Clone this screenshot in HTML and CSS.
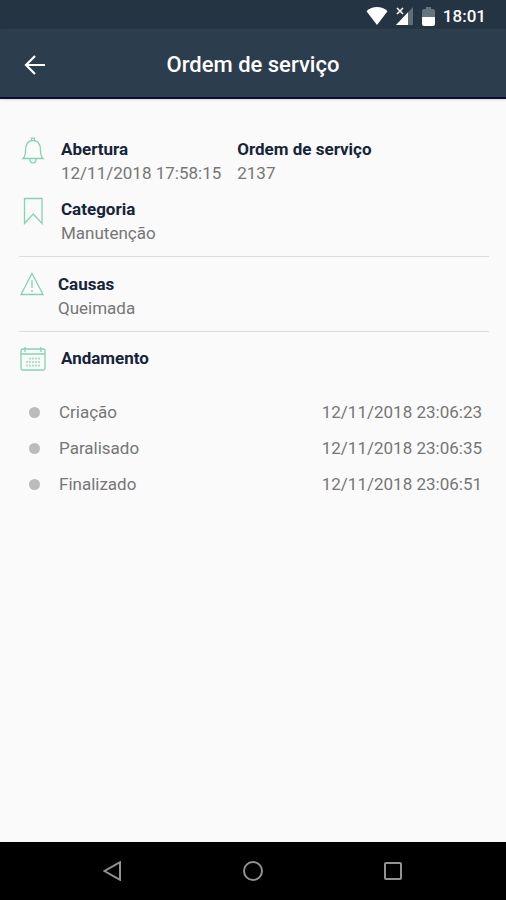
FILE: index.html
```html
<!DOCTYPE html>
<html lang="pt-BR">
<head>
<meta charset="utf-8">
<meta name="viewport" content="width=device-width, initial-scale=1">
<title>Ordem de serviço</title>
<link rel="stylesheet" href="styles.css">
</head>
<body>
<div class="status-bar">
  <svg width="22" height="18" viewBox="0 0 22 18" aria-hidden="true"><path d="M11 18 .5 4.200Q5 0 11 0t10.500 4.200z" fill="#fff"/></svg>
  <svg width="18" height="18" viewBox="0 0 18 18" aria-hidden="true"><path d="M17 0v18H0z" fill="#5f6d79"/><path d="M12 5.300V18H0z" fill="#fff"/><path d="m1 1 6 6M7 1 1 7" stroke="#fff" stroke-width="1.600"/></svg>
  <svg width="13" height="19" viewBox="0 0 13 19" aria-hidden="true"><path d="M4 0h5v2h2q2 0 2 2v7H0V4q0-2 2-2h2z" fill="#66747f"/><path d="M0 10h13v7q0 2-2 2H2q-2 0-2-2z" fill="#fff"/></svg>
  <time>18:01</time>
</div>
<header class="app-bar">
  <button class="back" type="button" aria-label="Voltar">
    <svg width="22" height="20" viewBox="0 0 22 20" fill="none" stroke="#fff" stroke-width="2.200" aria-hidden="true"><path d="M21 10H2M11 1 2 10l9 9"/></svg>
  </button>
  <h1>Ordem de serviço</h1>
</header>
<main>
  <section class="group">
    <div class="entry">
      <svg class="icon" width="26" height="28" viewBox="0 0 26 28" aria-hidden="true"><path d="M3 21.500c2-2 2.500-4 2.500-8 0-6 2.500-10 7.500-10s7.500 4 7.500 10c0 4 .5 6 2.500 8zM11.500 3.500V1.200h3v2.300M9.800 21.700c0 5.500 6.400 5.500 6.400 0"/></svg>
      <div class="pair">
        <div class="field"><h2>Abertura</h2><p>12/11/2018 17:58:15</p></div>
        <div class="field"><h2>Ordem de serviço</h2><p>2137</p></div>
      </div>
    </div>
    <div class="entry">
      <svg class="icon" width="26" height="28" viewBox="0 0 26 28" aria-hidden="true"><path d="M4.500 1.500h17.500v25l-8.750-9.500-8.750 9.500z"/></svg>
      <div class="field"><h2>Categoria</h2><p>Manutenção</p></div>
    </div>
  </section>
  <section class="group causes">
    <div class="entry">
      <svg class="icon" width="24" height="24" viewBox="0 0 24 24" aria-hidden="true"><path d="M12 1.500 23 22.500H1z"/><path d="M12 8v8M12 18v2"/></svg>
      <div class="field"><h2>Causas</h2><p>Queimada</p></div>
    </div>
  </section>
  <section class="group progress">
    <div class="entry">
      <svg class="icon" width="26" height="26" viewBox="0 0 26 26" aria-hidden="true"><rect x="1" y="3" width="24" height="21" rx="1.500"/><path d="M1 8h24M5 1v5M21 1v5"/><path d="M9 12.500h12M6 16h15M6 19.500h15" stroke-width="2" stroke-dasharray="2 1" opacity=".65"/></svg>
      <div class="field"><h2>Andamento</h2></div>
    </div>
    <ul class="timeline">
      <li><span class="step">Criação</span><time>12/11/2018 23:06:23</time></li>
      <li><span class="step">Paralisado</span><time>12/11/2018 23:06:35</time></li>
      <li><span class="step">Finalizado</span><time>12/11/2018 23:06:51</time></li>
    </ul>
  </section>
</main>
<nav class="system-nav" aria-label="Sistema">
  <button type="button" aria-label="Voltar"><svg width="20" height="20" viewBox="0 0 20 20" aria-hidden="true"><path d="M17 1.200v17.600L1.500 10z"/></svg></button>
  <button type="button" aria-label="Início"><svg width="20" height="20" viewBox="0 0 20 20" aria-hidden="true"><circle cx="10" cy="10" r="9"/></svg></button>
  <button type="button" aria-label="Recentes"><svg width="20" height="20" viewBox="0 0 20 20" aria-hidden="true"><rect x="2" y="2" width="16" height="16" rx="1"/></svg></button>
</nav>
</body>
</html>
```
FILE: styles.css
```css
* {
  box-sizing: border-box;
}

body {
  margin: 0;
  min-height: 100vh;
  display: flex;
  flex-direction: column;
  background: #fafafa;
  color: #767676;
  font: 17px/24px Roboto, sans-serif;
}

h1, h2, p, ul {
  margin: 0;
  padding: 0;
}

button {
  padding: 0;
  border: 0;
  background: none;
}

svg {
  display: block;
  flex: none;
}

.status-bar {
  display: flex;
  align-items: center;
  justify-content: flex-end;
  gap: 8px;
  height: 30px;
  padding: 2px 20px 0;
  background: #243442;
  color: #fff;
  font-weight: 500;
}

.app-bar {
  display: grid;
  grid-template-columns: 70px 1fr 70px;
  align-items: center;
  height: 69px;
  padding-top: 3px;
  background: #2c3e4e;
  border-bottom: 2px solid #0d0b30;
  box-shadow: 0 1px 2px #dcd5e6;
}

.back {
  height: 48px;
  display: grid;
  place-items: center;
}

h1 {
  color: #fff;
  font-size: 22px;
  font-weight: 500;
  text-align: center;
}

main {
  flex: 1;
  padding: 38px 17px 0 19px;
}

.group {
  display: flex;
  flex-direction: column;
  gap: 12px;
  padding-bottom: 11px;
  border-bottom: 1px solid #dcdcdc;
}

.entry {
  display: grid;
  grid-template-columns: 30px 1fr;
  column-gap: 12px;
}

.icon {
  margin-left: 1px;
  fill: none;
  stroke: #86d3b3;
  stroke-width: 1.3;
}

.pair {
  display: flex;
  gap: 16px;
}

h2 {
  color: #16243a;
  font-size: 17px;
  font-weight: 700;
}

.causes {
  padding-top: 15px;
}

.causes .entry {
  column-gap: 9px;
}

.progress {
  gap: 28px;
  padding-top: 14px;
  border: 0;
}

.timeline {
  display: grid;
  gap: 12px;
  padding: 0 7px 0 10px;
  list-style: none;
}

.timeline li {
  display: flex;
  align-items: center;
}

.timeline li::before {
  content: "";
  width: 11px;
  height: 11px;
  margin-right: 19px;
  border-radius: 50%;
  background: #b9bbbd;
}

.step {
  flex: 1;
}

.system-nav {
  display: flex;
  justify-content: space-around;
  align-items: center;
  height: 58px;
  padding: 0 43px;
  background: #000;
}

.system-nav button {
  display: grid;
  place-items: center;
  width: 48px;
  height: 48px;
}

.system-nav svg {
  fill: none;
  stroke: #929292;
  stroke-width: 2;
}
```
